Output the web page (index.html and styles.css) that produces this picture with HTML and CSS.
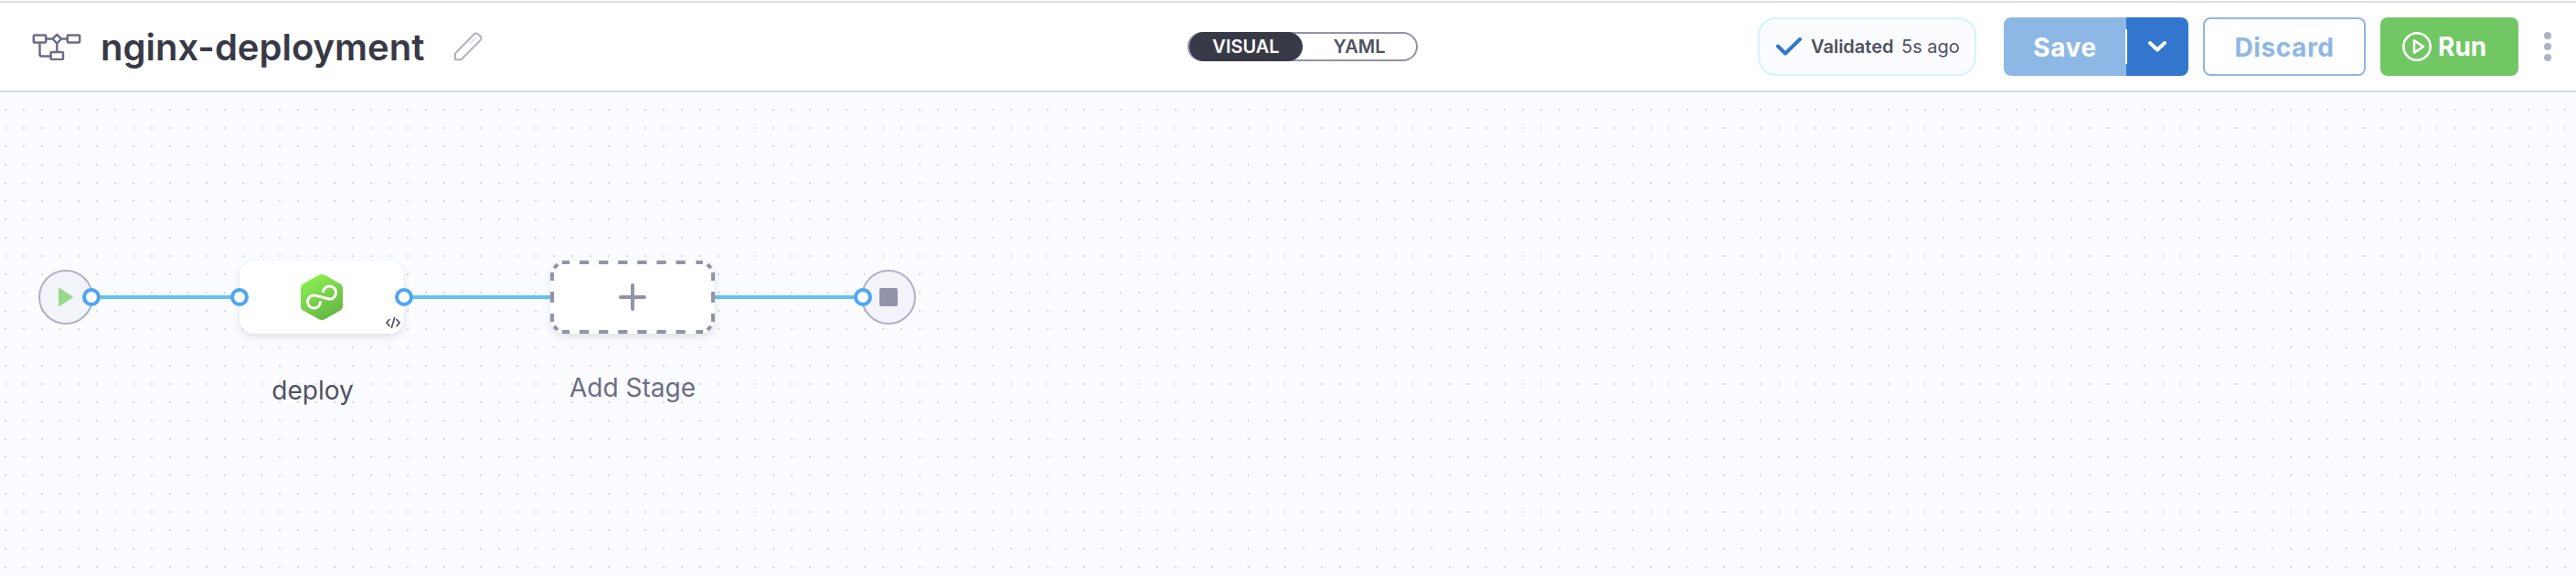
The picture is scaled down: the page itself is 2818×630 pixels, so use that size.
FILE: index.html
```html
<!DOCTYPE html>
<html lang="en">
<head>
<meta charset="utf-8">
<title>nginx-deployment</title>
<link rel="stylesheet" href="styles.css">
</head>
<body>
<header class="header">
  <div class="title-group">
    <svg class="pipeline-icon" width="54" height="30" viewBox="0 0 54 30" fill="none" stroke="#6b6d85" stroke-width="2.5" stroke-linejoin="round">
      <rect x="1.8" y="2.4" width="13.4" height="8" rx="1"/>
      <rect x="38.8" y="2.4" width="13.4" height="8" rx="1"/>
      <rect x="20.6" y="21" width="13.4" height="8" rx="1"/>
      <path d="M27.300 1.800 32 6.500 27.300 11.500 22.500 6.500ZM15 6.500H22.500M32 6.500H38.500M27.300 12V21M8.500 10.500V23.200Q8.500 25.500 10.500 25.500H20.500"/>
    </svg>
    <h1 class="title">nginx-deployment</h1>
    <svg class="pencil-icon" width="32" height="32" viewBox="0 0 32 32" fill="none" stroke="#b0b1c4" stroke-width="2" stroke-linejoin="round">
      <path d="M2 23.500 22.500 2.500Q24 1 25.800 1.600Q29.500 3 30.400 6.500Q30.600 8 29.500 9L8.500 30.200H2Z"/>
      <path d="M18 12.500 25 6" stroke="#e4e4ec"/>
    </svg>
  </div>
  <div class="toggle">
    <span class="toggle-item toggle-active">VISUAL</span>
    <span class="toggle-item toggle-idle">YAML</span>
  </div>
  <div class="actions">
    <div class="validated">
      <svg width="28" height="20" viewBox="0 0 28 20" fill="none" stroke="#3376cd" stroke-width="4" stroke-linecap="round" stroke-linejoin="round"><path d="M2 9.500 10 17.500 26 2"/></svg>
      <strong class="validated-label">Validated</strong>
      <span class="validated-time">5s ago</span>
    </div>
    <div class="save-group">
      <button class="save">Save</button>
      <button class="save-menu">
        <svg width="20" height="12" viewBox="0 0 20 12" fill="none" stroke="#fff" stroke-width="4" stroke-linecap="round" stroke-linejoin="round"><path d="M2 2 10 9.500 18 2"/></svg>
      </button>
    </div>
    <button class="discard">Discard</button>
    <button class="run">
      <svg width="32" height="32" viewBox="0 0 32 32" fill="none" stroke="#fff" stroke-width="2.600" stroke-linejoin="round"><circle cx="16" cy="16" r="14.700"/><path d="M13 9.300V22.700L23 16Z"/></svg>
      <span>Run</span>
    </button>
    <svg class="more" width="8" height="32" viewBox="0 0 8 32" fill="#b0b1c4"><circle cx="4" cy="4" r="4"/><circle cx="4" cy="16" r="4"/><circle cx="4" cy="28" r="4"/></svg>
  </div>
</header>
<main class="canvas">
  <div class="link link-1"></div>
  <div class="link link-2"></div>
  <div class="link link-3"></div>
  <div class="terminal start">
    <svg width="16" height="20" viewBox="0 0 16 20" fill="#98da8b"><path d="M0 1.500Q0-.6 2 .5L15 8.900Q16.600 10 15 11.100L2 19.600Q0 20.600 0 18.500Z"/></svg>
  </div>
  <div class="terminal end"><span class="stop"></span></div>
  <div class="node stage">
    <svg class="hexagon" width="46" height="50" viewBox="0 0 46 50">
      <defs><linearGradient id="hex" x1="0.2" y1="0" x2="0.75" y2="1"><stop offset="0" stop-color="#8bf24f"/><stop offset="1" stop-color="#65b345"/></linearGradient></defs>
      <path fill="url(#hex)" d="M19.800.8Q23-.8 26.200.8L43 10.200Q46 12 46 15.500V34.500Q46 38 43 39.800L26.200 49.200Q23 50.800 19.800 49.200L3 39.800Q0 38 0 34.500V15.500Q0 12 3 10.200Z"/>
      <path fill="none" stroke="#fff" stroke-width="3" d="M24.500 20C24.500 15.500 28 13 31.500 13C35.500 13 38.500 16.200 38.500 20C38.500 24.500 34.500 28 30 26.800L15.500 23.100C11.500 22.100 7.500 25.500 7.500 30C7.500 34 10.500 37 14.500 37C18.500 37 21.500 34 21.500 29.500"/>
    </svg>
    <svg class="code-icon" width="16" height="12" viewBox="0 0 16 12" fill="none" stroke="#4f5162" stroke-width="1.700"><path d="M4.500 2 1 6 4.500 10M11.500 2 15 6 11.500 10M9.800 0 6.200 12"/></svg>
  </div>
  <div class="node add">
    <svg class="dashes" width="180" height="80" viewBox="0 0 180 80" fill="none" stroke="#9293ab" stroke-width="4">
      <path d="M13 2H167M13 78H167" stroke-dasharray="8 11 10.200 10.900 10.200 10.900 10.200 10.900 10.200 10.900 10.200 10.900 10.200 11.600 8 99"/>
      <path d="M2 13V67M178 13V67" stroke-dasharray="9 12 12 12 9 99"/>
      <path d="M4.200 8.200 8.200 4.200M171.800 4.200 175.800 8.200M4.200 71.800 8.200 75.800M175.800 71.800 171.800 75.800"/>
    </svg>
    <svg width="30" height="30" viewBox="0 0 30 30" stroke="#9293ab" stroke-width="4" stroke-linecap="round"><path d="M15 2V28M2 15H28"/></svg>
  </div>
  <i class="port port-1"></i>
  <i class="port port-2"></i>
  <i class="port port-3"></i>
  <i class="port port-4"></i>
  <div class="label label-deploy">deploy</div>
  <div class="label label-add">Add Stage</div>
</main>
</body>
</html>
```
FILE: styles.css
```css
* { box-sizing: border-box; }
body { margin: 0; width: 2818px; height: 630px; overflow: hidden; background: #fff; font-family: Inter, "Liberation Sans", sans-serif; display: flex; flex-direction: column; padding-top: 1px; }
svg { display: block; flex: none; }
button { font: 700 28px/1 Inter, "Liberation Sans", sans-serif; border: 0; padding: 1px 0 0; margin: 0; height: 64px; display: flex; align-items: center; justify-content: center; letter-spacing: 0.6px; }

.header { height: 100px; flex: none; border-top: 2px solid #d9dae5; border-bottom: 2px solid #d9dae5; display: grid; grid-template-columns: 1299px 252px 1fr; align-items: center; }
.title-group { display: flex; align-items: center; padding-left: 35px; }
.title { margin: 0 0 0 21px; padding-top: 2px; width: 386px; font-size: 40px; font-weight: 600; line-height: 48px; color: #383946; white-space: nowrap; }

.toggle { height: 32px; border-radius: 16px; box-shadow: inset 0 0 0 2px #9293ab; display: flex; padding-left: 2px; font-size: 20px; font-weight: 600; line-height: 33px; text-align: center; }
.toggle-item { width: 124px; height: 32px; }
.toggle-active { background: #383946; color: #fff; border-radius: 16px; }
.toggle-idle { color: #4f5162; }

.actions { display: flex; align-items: center; justify-content: flex-end; padding-right: 27px; white-space: nowrap; }
.validated { width: 239px; height: 64px; margin-right: 30px; padding-left: 18px; border: 2px solid #d3f3fe; border-radius: 20px; background: #fbfcff; display: flex; align-items: center; font-size: 20px; color: #4f5162; }
.validated-label { margin-left: 10px; width: 99px; font-weight: 600; }
.save-group { display: flex; margin-right: 16px; position: relative; }
.save-group::after { content: ""; position: absolute; left: 133px; top: 13px; width: 2px; height: 38px; background: #fff; }
.save { width: 134px; background: #8db8e6; color: #fff; border-radius: 8px 0 0 8px; }
.save-menu { width: 68px; padding: 0; background: #3376cd; border-radius: 0 8px 8px 0; }
.discard { width: 178px; margin-right: 16px; border: 2px solid #8db8e6; border-radius: 8px; background: #fff; color: #8db8e6; }
.run { width: 151px; margin-right: 28px; padding: 0 0 0 24px; justify-content: flex-start; background: #71c763; color: #fff; border-radius: 8px; gap: 7px; letter-spacing: 0; }

.canvas { position: relative; flex: 1; background: #fbfcff conic-gradient(from 90deg at 18px 18px, #d9dae0 90deg, transparent 0) 7px 0 / 20px 20px; }
.link { position: absolute; top: 222px; height: 4px; background: #65c2f1; }
.link-1 { left: 100px; width: 162px; }
.link-2 { left: 442px; width: 160px; }
.link-3 { left: 782px; width: 162px; }
.terminal { position: absolute; top: 194px; width: 60px; height: 60px; border: 2px solid #b0b1c4; border-radius: 50%; background: #f3f3fa; display: flex; align-items: center; justify-content: center; }
.start { left: 42px; }
.end { left: 942px; }
.stop { width: 20px; height: 20px; border-radius: 2px; background: #9293ab; }
.node { position: absolute; top: 184px; width: 180px; height: 80px; border-radius: 16px; background: #fff; box-shadow: 0 4px 8px rgba(96, 97, 112, 0.16), 0 0 2px rgba(40, 41, 61, 0.04); display: flex; align-items: center; justify-content: center; }
.stage { left: 262px; }
.add { left: 602px; }
.code-icon { position: absolute; left: 160px; top: 62px; }
.dashes { position: absolute; left: 0; top: 0; }
.port { position: absolute; top: 214px; width: 20px; height: 20px; border: 4px solid #4fa5f2; border-radius: 50%; background: #fff; }
.port-1 { left: 90px; }
.port-2 { left: 252px; }
.port-3 { left: 432px; }
.port-4 { left: 934px; }
.label { position: absolute; font-size: 28px; line-height: 34px; text-align: center; white-space: nowrap; }
.label-deploy { left: 242px; width: 200px; top: 309px; color: #4f5162; }
.label-add { left: 592px; width: 200px; top: 306px; color: #6b6d85; }
```
